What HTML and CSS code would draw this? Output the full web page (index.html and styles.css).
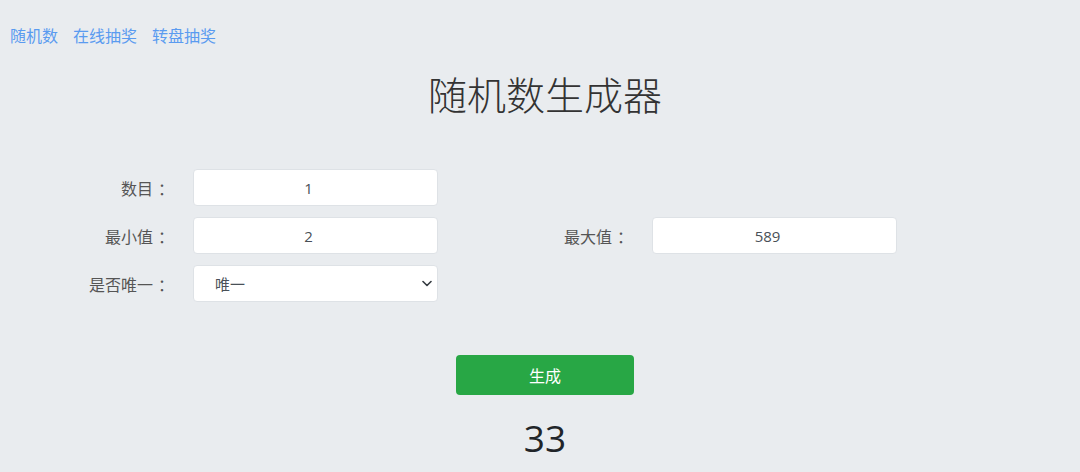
FILE: index.html
```html
<!DOCTYPE html>
<html lang="zh">
<head>
<meta charset="utf-8">
<title>随机数生成器</title>
<link rel="stylesheet" href="styles.css">
</head>
<body>
<div class="page">
  <nav class="nav">
    <a href="#">随机数</a>
    <a href="#">在线抽奖</a>
    <a href="#">转盘抽奖</a>
  </nav>
  <h1 class="title">随机数生成器</h1>
  <div class="form">
    <div class="row">
      <label class="label">数目<span class="colon">：</span></label>
      <input class="field num" type="text" value="1">
    </div>
    <div class="row">
      <label class="label">最小值<span class="colon">：</span></label>
      <input class="field num" type="text" value="2">
      <label class="label">最大值<span class="colon">：</span></label>
      <input class="field num" type="text" value="589">
    </div>
    <div class="row">
      <label class="label">是否唯一<span class="colon">：</span></label>
      <div class="select-wrap">
        <select class="field select">
          <option>唯一</option>
          <option>不唯一</option>
        </select>
        <svg class="chev" width="10" height="7" viewBox="0 0 10 7"><path d="M1 1.5 L5 5.5 L9 1.5" fill="none" stroke="#343a40" stroke-width="1.6" stroke-linecap="round" stroke-linejoin="round"/></svg>
      </div>
    </div>
  </div>
  <div class="actions">
    <button class="btn" type="button">生成</button>
  </div>
  <div class="result">33</div>
</div>
</body>
</html>
```
FILE: styles.css
```css
html, body {
  margin: 0;
  padding: 0;
  background: #e9ecef;
}
body {
  font-family: "Open Sans", "Noto Sans CJK SC", sans-serif;
  color: #495057;
}
.page {
  padding-left: 10px;
  width: 1070px;
}
.nav {
  display: flex;
  gap: 15px;
  padding-top: 25px;
  font-family: "Noto Sans CJK SC", sans-serif;
  font-size: 16px;
  line-height: 20px;
}
.nav a {
  color: #5a9bf0;
  text-decoration: none;
}
.title {
  margin: 25px 0 0;
  text-align: center;
  font-family: "Noto Sans CJK SC Light", "Noto Sans CJK SC DemiLight", "Noto Sans CJK SC", sans-serif;
  font-weight: 300;
  font-size: 39px;
  line-height: 47px;
  color: #333;
  letter-spacing: 0;
}
.form {
  margin-top: 52px;
  display: flex;
  flex-direction: column;
  gap: 11px;
}
.row {
  display: grid;
  grid-template-columns: 168px 245px 184px 245px;
  column-gap: 15px;
  align-items: center;
  height: 37px;
}
.label {
  text-align: right;
  padding-right: 4px;
  font-family: "Noto Sans CJK SC", sans-serif;
  font-size: 16px;
  color: #555;
}
.colon {
  padding-left: 5px;
}
.field {
  box-sizing: border-box;
  width: 245px;
  height: 37px;
  border: 1px solid #dee2e6;
  border-radius: 4px;
  background: #fff;
  font-family: "Open Sans", "Noto Sans CJK SC", sans-serif;
  font-size: 15px;
  color: #495057;
  outline: none;
}
.num {
  text-align: center;
  padding: 0 14px 0 0;
}
.select-wrap {
  position: relative;
  width: 245px;
  height: 37px;
}
.select {
  appearance: none;
  -webkit-appearance: none;
  padding: 0 0 0 21px;
  font-family: "Noto Sans CJK SC", sans-serif;
}
.chev {
  position: absolute;
  right: 6px;
  top: 15px;
  pointer-events: none;
}
.actions {
  display: flex;
  justify-content: center;
  margin-top: 53px;
}
.btn {
  width: 178px;
  height: 40px;
  border: 0;
  border-radius: 4px;
  background: #28a745;
  color: #fff;
  font-family: "Noto Sans CJK SC", sans-serif;
  font-size: 16px;
  padding: 0;
}
.result {
  text-align: center;
  margin-top: 18px;
  font-family: "Open Sans", sans-serif;
  font-size: 37px;
  line-height: 50px;
  color: #212529;
}
```
